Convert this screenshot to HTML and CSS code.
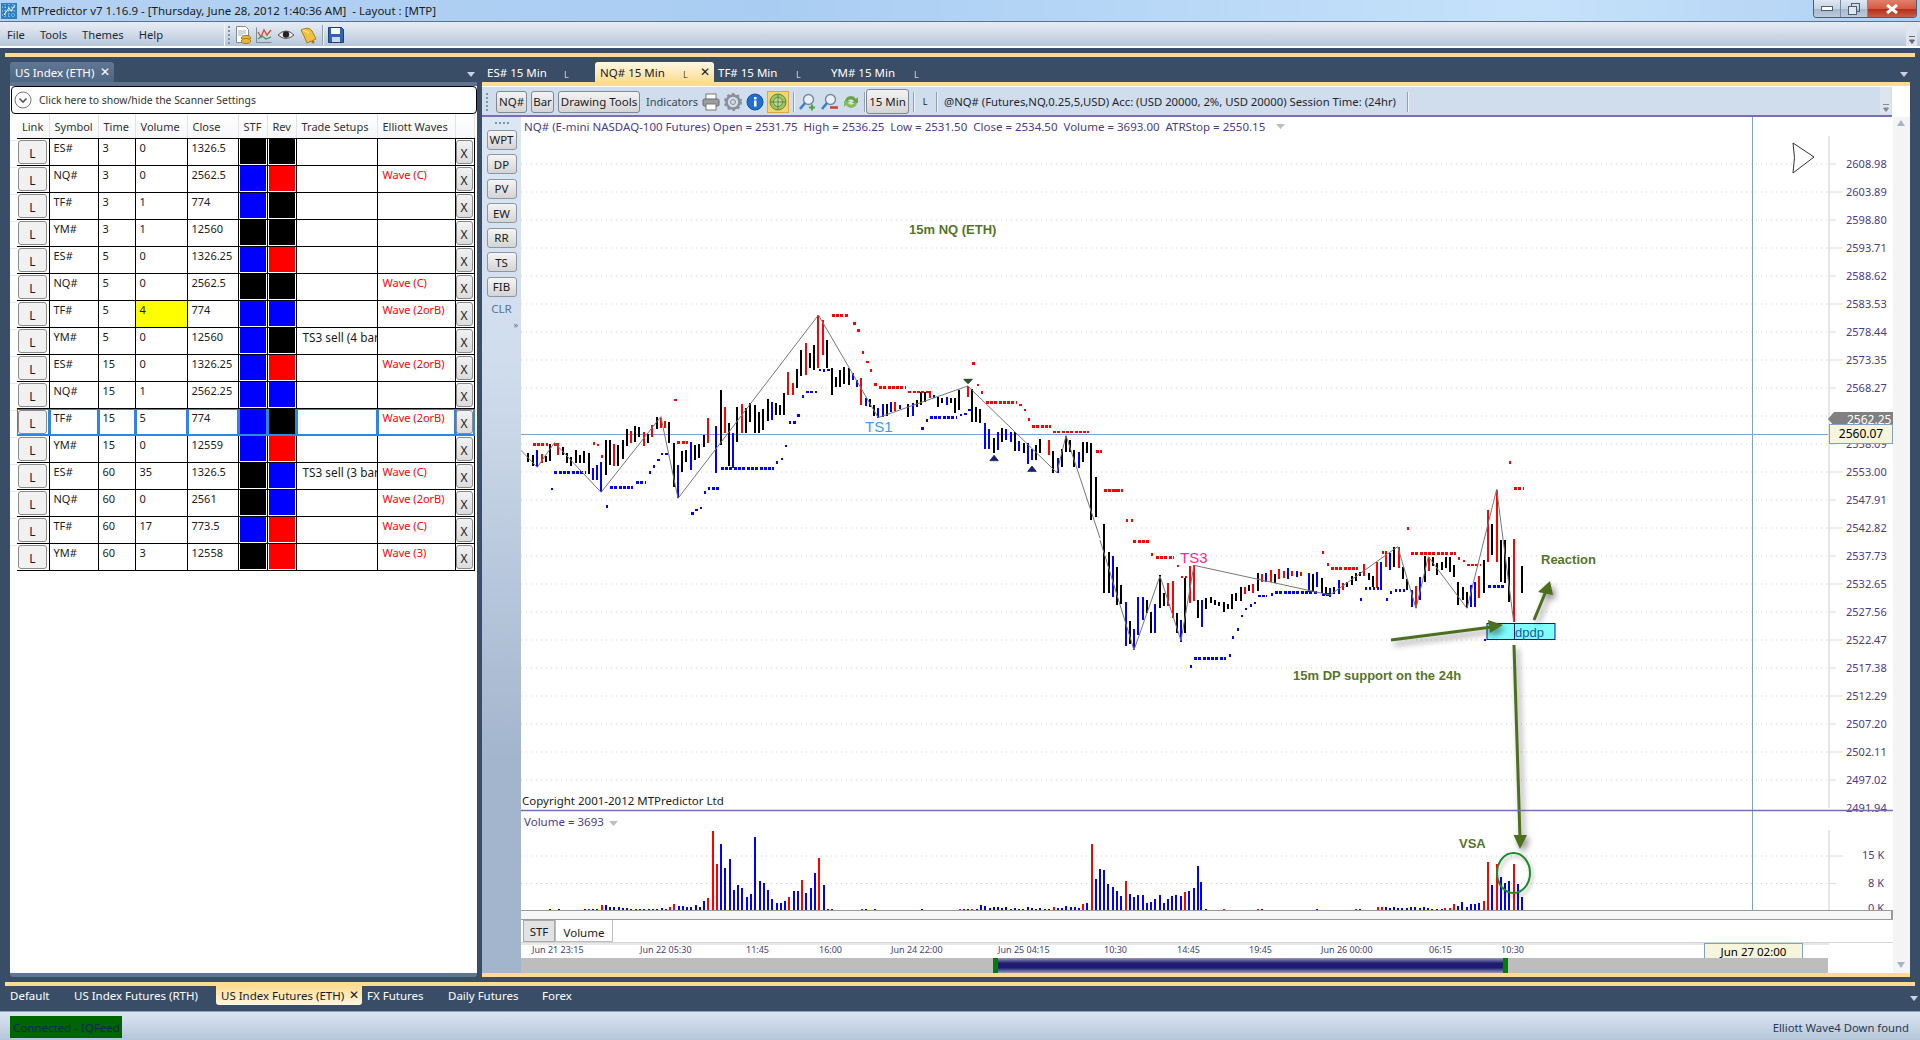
FILE: index.html
```html
<!DOCTYPE html>
<html lang="en">
<head>
<meta charset="utf-8">
<title>MTPredictor</title>
<link rel="stylesheet" href="styles.css">
</head>
<body>
<div class="titlebar">
  <svg class="appicon" width="16" height="16" viewBox="0 0 16 16"><rect width="16" height="16" fill="#2f7fc4"/><path d="M1 4h14M1 8h14M1 12h14M4 1v14M8 1v14M12 1v14" stroke="#bfe3f7" stroke-dasharray="1 2"/><path d="M3 12L8 5l2 3 4-6" stroke="#fff" fill="none"/></svg>
  <span class="titletext">MTPredictor v7 1.16.9 - [Thursday, June 28, 2012 1:40:36 AM] &nbsp;- Layout : [MTP]</span>
  <div class="winbtns">
    <span class="winbtn"><svg width="12" height="6"><rect x=".5" y=".5" width="11" height="4" fill="#fff" stroke="#4c5e74"/></svg></span>
    <span class="winbtn"><svg width="12" height="12"><rect x="3.5" y=".5" width="8" height="8" fill="none" stroke="#4c5e74"/><rect x=".5" y="3.5" width="8" height="8" fill="#dfe7f0" stroke="#4c5e74"/></svg></span>
    <span class="winbtn close"><svg width="14" height="10"><path d="M2 1l10 8M12 1L2 9" stroke="#fff" stroke-width="3"/></svg></span>
  </div>
</div>
<div class="menubar">
  <nav class="menu"><span>File</span><span>Tools</span><span>Themes</span><span>Help</span></nav>
  <div class="quick">
    <i class="grip"></i>
    <svg width="16" height="18" viewBox="0 0 16 18"><path d="M1.5.5h9l3 3v13h-12z" fill="#fff" stroke="#7d8a99"/><path d="M3 5h8M3 7h8M3 9h5" stroke="#9fb0c2"/><ellipse cx="11" cy="12" rx="4.500" ry="2.500" fill="#e6b93e" stroke="#a07a1c"/><ellipse cx="11" cy="15" rx="4.500" ry="2.500" fill="#e6b93e" stroke="#a07a1c"/></svg>
    <svg width="16" height="16" viewBox="0 0 16 16"><path d="M.5.5v15h15" fill="none" stroke="#7d8a99"/><path d="M2 5l3 5 3-7 3 5 4-5" fill="none" stroke="#d14a3c" stroke-width="1.300"/><path d="M2 12l4-3 4 3 5-2" fill="none" stroke="#3f9b4a" stroke-width="1.300"/></svg>
    <svg width="18" height="12" viewBox="0 0 18 12"><path d="M1 6q8-8 16 0q-8 7-16 0z" fill="#eee" stroke="#555"/><circle cx="9" cy="5.500" r="3.200" fill="#222"/></svg>
    <svg width="17" height="17" viewBox="0 0 17 17"><path d="M1 3q8-4 11 1l4 8-9 4-3-7z" fill="#f0c040" stroke="#a67c1a"/><path d="M3 3l6 3" stroke="#fff3c4"/><circle cx="13" cy="15" r="1.500" fill="#a67c1a"/></svg>
    <i class="vsep"></i>
    <svg width="16" height="16" viewBox="0 0 16 16"><path d="M.5.5h13l2 2v13H.5z" fill="#2f62b8" stroke="#1d3f7c"/><rect x="3" y="1" width="9" height="6" fill="#fff"/><rect x="4" y="10" width="8" height="5" fill="#cfd9e6"/></svg>
  </div>
  <div class="overflow"><svg width="8" height="8"><path d="M1 .5h6M1.500 4h5L4 7.500z" stroke="#667" fill="#667"/></svg></div>
</div>

<div class="workspace">
  <div class="docline"></div>
  <div class="docs">
    <aside class="leftdock">
      <div class="docktabs">
        <span class="docktab">US Index (ETH) <b class="cross">✕</b></span>
        <i class="tri-white"></i>
      </div>
      <div class="scanner">
        <div class="settings">
          <span class="chev"><svg width="18" height="18" viewBox="0 0 18 18"><circle cx="9" cy="9" r="8" fill="#fff" stroke="#777"/><path d="M5.500 7.500L9 11l3.500-3.500" fill="none" stroke="#555" stroke-width="1.600"/></svg></span>
          Click here to show/hide the Scanner Settings
        </div>
        <table class="grid">
          <colgroup><col class="c-l"><col class="c-sym"><col class="c-time"><col class="c-vol"><col class="c-close"><col class="c-stf"><col class="c-rev"><col class="c-ts"><col class="c-ew"><col class="c-x"></colgroup>
          <thead><tr><th>Link</th><th>Symbol</th><th>Time</th><th>Volume</th><th>Close</th><th>STF</th><th>Rev</th><th>Trade Setups</th><th>Elliott Waves</th><th></th></tr></thead>
          <tbody>
            <tr><td class="lb"><button>L</button></td><td>ES#</td><td>3</td><td>0</td><td>1326.5</td><td class="sw k"><i></i></td><td class="sw k"><i></i></td><td></td><td class="ew"></td><td class="xb"><button>X</button></td></tr>
            <tr><td class="lb"><button>L</button></td><td>NQ#</td><td>3</td><td>0</td><td>2562.5</td><td class="sw b"><i></i></td><td class="sw r"><i></i></td><td></td><td class="ew">Wave (C)</td><td class="xb"><button>X</button></td></tr>
            <tr><td class="lb"><button>L</button></td><td>TF#</td><td>3</td><td>1</td><td>774</td><td class="sw b"><i></i></td><td class="sw k"><i></i></td><td></td><td class="ew"></td><td class="xb"><button>X</button></td></tr>
            <tr><td class="lb"><button>L</button></td><td>YM#</td><td>3</td><td>1</td><td>12560</td><td class="sw k"><i></i></td><td class="sw k"><i></i></td><td></td><td class="ew"></td><td class="xb"><button>X</button></td></tr>
            <tr><td class="lb"><button>L</button></td><td>ES#</td><td>5</td><td>0</td><td>1326.25</td><td class="sw b"><i></i></td><td class="sw r"><i></i></td><td></td><td class="ew"></td><td class="xb"><button>X</button></td></tr>
            <tr><td class="lb"><button>L</button></td><td>NQ#</td><td>5</td><td>0</td><td>2562.5</td><td class="sw k"><i></i></td><td class="sw k"><i></i></td><td></td><td class="ew">Wave (C)</td><td class="xb"><button>X</button></td></tr>
            <tr><td class="lb"><button>L</button></td><td>TF#</td><td>5</td><td class="hl">4</td><td>774</td><td class="sw b"><i></i></td><td class="sw b"><i></i></td><td></td><td class="ew">Wave (2orB)</td><td class="xb"><button>X</button></td></tr>
            <tr><td class="lb"><button>L</button></td><td>YM#</td><td>5</td><td>0</td><td>12560</td><td class="sw b"><i></i></td><td class="sw k"><i></i></td><td class="ts">TS3 sell (4 bar</td><td class="ew"></td><td class="xb"><button>X</button></td></tr>
            <tr><td class="lb"><button>L</button></td><td>ES#</td><td>15</td><td>0</td><td>1326.25</td><td class="sw b"><i></i></td><td class="sw r"><i></i></td><td></td><td class="ew">Wave (2orB)</td><td class="xb"><button>X</button></td></tr>
            <tr><td class="lb"><button>L</button></td><td>NQ#</td><td>15</td><td>1</td><td>2562.25</td><td class="sw b"><i></i></td><td class="sw b"><i></i></td><td></td><td class="ew"></td><td class="xb"><button>X</button></td></tr>
            <tr class="sel"><td class="lb"><button>L</button></td><td>TF#</td><td>15</td><td>5</td><td>774</td><td class="sw b"><i></i></td><td class="sw k"><i></i></td><td></td><td class="ew">Wave (2orB)</td><td class="xb"><button>X</button></td></tr>
            <tr><td class="lb"><button>L</button></td><td>YM#</td><td>15</td><td>0</td><td>12559</td><td class="sw b"><i></i></td><td class="sw r"><i></i></td><td></td><td class="ew"></td><td class="xb"><button>X</button></td></tr>
            <tr><td class="lb"><button>L</button></td><td>ES#</td><td>60</td><td>35</td><td>1326.5</td><td class="sw k"><i></i></td><td class="sw b"><i></i></td><td class="ts">TS3 sell (3 bar</td><td class="ew">Wave (C)</td><td class="xb"><button>X</button></td></tr>
            <tr><td class="lb"><button>L</button></td><td>NQ#</td><td>60</td><td>0</td><td>2561</td><td class="sw k"><i></i></td><td class="sw b"><i></i></td><td></td><td class="ew">Wave (2orB)</td><td class="xb"><button>X</button></td></tr>
            <tr><td class="lb"><button>L</button></td><td>TF#</td><td>60</td><td>17</td><td>773.5</td><td class="sw b"><i></i></td><td class="sw r"><i></i></td><td></td><td class="ew">Wave (C)</td><td class="xb"><button>X</button></td></tr>
            <tr><td class="lb"><button>L</button></td><td>YM#</td><td>60</td><td>3</td><td>12558</td><td class="sw k"><i></i></td><td class="sw r"><i></i></td><td></td><td class="ew">Wave (3)</td><td class="xb"><button>X</button></td></tr>
          </tbody>
        </table>
      </div>
    </aside>

    <main class="chartdock">
      <div class="charttabs">
        <span class="ctab w1">ES# 15 Min<small>L</small></span>
        <span class="ctab active">NQ# 15 Min<small>L</small><b class="cross">✕</b></span>
        <span class="ctab w2">TF# 15 Min<small>L</small></span>
        <span class="ctab w3">YM# 15 Min<small>L</small></span>
        <i class="tri-white"></i>
      </div>
      <div class="chartframe">
        <div class="charttool">
          <i class="grip"></i>
          <button class="tb b1">NQ#</button>
          <button class="tb b2">Bar</button>
          <button class="tb b3">Drawing Tools</button>
          <span class="tlabel">Indicators</span>
          <svg width="18" height="18" viewBox="0 0 18 18"><rect x="4" y="1" width="10" height="6" fill="#fff" stroke="#777"/><rect x="1" y="6" width="16" height="7" rx="1.500" fill="#9a9ea5" stroke="#666"/><rect x="4" y="11" width="10" height="6" fill="#fff" stroke="#777"/></svg>
          <svg width="18" height="18" viewBox="0 0 18 18"><circle cx="9" cy="9" r="6.500" fill="none" stroke="#8a8f96" stroke-width="2.500"/><circle cx="9" cy="9" r="8" fill="none" stroke="#8a8f96" stroke-width="2" stroke-dasharray="2.600 2.600"/><circle cx="9" cy="9" r="2.500" fill="#d5d8dc" stroke="#8a8f96"/></svg>
          <svg width="18" height="18" viewBox="0 0 18 18"><circle cx="9" cy="9" r="8" fill="#1f6fd0" stroke="#174f9c"/><rect x="8" y="7.500" width="2.500" height="6" fill="#fff"/><rect x="8" y="4" width="2.500" height="2.400" fill="#fff"/></svg>
          <span class="ichi"><svg width="18" height="18" viewBox="0 0 18 18"><circle cx="9" cy="9" r="8" fill="#9fc36a" stroke="#5f8a3a"/><circle cx="9" cy="9" r="4.500" fill="#c2dc95" stroke="#5f8a3a"/><path d="M9 1v16M1 9h16" stroke="#5f8a3a"/></svg></span>
          <i class="vsep"></i>
          <svg width="18" height="18" viewBox="0 0 18 18"><circle cx="10.500" cy="6.500" r="5" fill="#e8f1f9" stroke="#7a8794" stroke-width="1.400"/><path d="M7 10L2 16" stroke="#3d7ec4" stroke-width="2.600"/><path d="M11 14.500h6M14 11.500v6" stroke="#4ea24a" stroke-width="2"/></svg>
          <svg width="18" height="18" viewBox="0 0 18 18"><circle cx="10.500" cy="6.500" r="5" fill="#e8f1f9" stroke="#7a8794" stroke-width="1.400"/><path d="M7 10L2 16" stroke="#3d7ec4" stroke-width="2.600"/><path d="M10 14.500h8" stroke="#d93a32" stroke-width="2.500"/></svg>
          <svg width="18" height="18" viewBox="0 0 18 18"><path d="M3 8a6 6 0 0 1 11-2l2-2v6h-6l2-2a4 4 0 0 0-7 1z" fill="#6aa53f"/><path d="M15 10a6 6 0 0 1-11 2l-2 2V8h6l-2 2a4 4 0 0 0 7-1z" fill="#86bb55"/></svg>
          <i class="vsep"></i>
          <button class="tb b4">15 Min</button>
          <i class="vsep"></i>
          <span class="tl">L</span>
          <i class="vsep"></i>
          <span class="tinfo">@NQ# (Futures,NQ,0.25,5,USD) Acc: (USD 20000, 2%, USD 20000) Session Time: (24hr)</span>
          <i class="vsep"></i>
          <div class="tool-end"><svg width="8" height="8"><path d="M1 .5h6M1.500 4h5L4 7.500z" stroke="#889" fill="#889"/></svg></div>
        </div>
        <div class="chartbody">
          <div class="sidetools">
            <i class="hgrip"></i>
            <button class="sb">WPT</button><button class="sb">DP</button><button class="sb">PV</button><button class="sb">EW</button><button class="sb">RR</button><button class="sb">TS</button><button class="sb">FIB</button>
            <span class="clr">CLR</span>
            <span class="more">»</span>
          </div>
          <div class="chartcol">
            <div class="panes">
              <svg class="plot" width="1372" height="793" viewBox="521 117 1372 793">
                <path class="gridl" d="M521 164H1829M521 192H1829M521 220H1829M521 248H1829M521 276H1829M521 304H1829M521 332H1829M521 360H1829M521 388H1829M521 416H1829M521 444H1829M521 472H1829M521 500H1829M521 528H1829M521 556H1829M521 584H1829M521 612H1829M521 640H1829M521 668H1829M521 696H1829M521 724H1829M521 752H1829M521 780H1829M521 856H1829M521 883.500H1829"/>
                <path class="vline" d="M1752.500 117V910"/>
                <path class="axis" d="M1829 136V808M1829 830V910"/>
                <path class="ticks" d="M1829 164H1836M1829 192H1843M1829 220H1836M1829 248H1843M1829 276H1836M1829 304H1843M1829 332H1836M1829 360H1843M1829 388H1836M1829 444H1836M1829 472H1843M1829 500H1836M1829 528H1843M1829 556H1836M1829 584H1843M1829 612H1836M1829 640H1843M1829 668H1836M1829 696H1843M1829 724H1836M1829 752H1843M1829 780H1836M1829 856H1843M1829 883.500H1836"/>
                <path class="priceline" d="M521 434.500H1828"/>

                <text class="legend" x="524" y="131" xml:space="preserve">NQ# (E-mini NASDAQ-100 Futures) Open = 2531.75  High = 2536.25  Low = 2531.50  Close = 2534.50  Volume = 3693.00  ATRStop = 2550.15</text>
                <path class="tri" d="M1276 124h9l-4.500 5z"/>
                <path class="play" d="M1793 143L1814 157L1793 173Q1796 157 1793 143z"/>

                <g class="axlabels">
                  <text x="1846" y="168">2608.98</text><text x="1846" y="196">2603.89</text><text x="1846" y="224">2598.80</text><text x="1846" y="252">2593.71</text><text x="1846" y="280">2588.62</text><text x="1846" y="308">2583.53</text><text x="1846" y="336">2578.44</text><text x="1846" y="364">2573.35</text><text x="1846" y="392">2568.27</text><text x="1846" y="448">2558.09</text><text x="1846" y="476">2553.00</text><text x="1846" y="504">2547.91</text><text x="1846" y="532">2542.82</text><text x="1846" y="560">2537.73</text><text x="1846" y="588">2532.65</text><text x="1846" y="616">2527.56</text><text x="1846" y="644">2522.47</text><text x="1846" y="672">2517.38</text><text x="1846" y="700">2512.29</text><text x="1846" y="728">2507.20</text><text x="1846" y="756">2502.11</text><text x="1846" y="784">2497.02</text><text x="1846" y="812">2491.94</text>
                  <text x="1862" y="859">15 K</text><text x="1868" y="887">8 K</text><text x="1868" y="912">0 K</text>
                </g>

                <g transform="translate(520 290) scale(.38265 .33333)">
                  <path class="bar k" d="M22 490V515M33 495V527M68 498V516M78 463V514M112 470V495M122 490V520M133 500V527M146 480V518M157 495V520M168 482V518M180 490V552M224 450V555M235 450V525M257 465V528M268 450V508M280 418V468M301 408V455M312 412V440M335 432V460M357 380V418M390 397V460M402 460V592M424 483V545M434 480V515M457 465V510M468 462V505M480 435V472M525 300V465M547 400V528M568 352V455M590 355V430M602 340V395M613 345V430M624 367V430M636 357V420M647 327V392M668 340V375M680 345V375M691 310V375M724 237V295M735 180V258M758 190V235M769 165V240M803 150V235M815 235V315M825 262V290M837 240V290M848 232V282M860 235V285M915 327V350M925 345V378M958 342V378M1014 342V380M1037 330V350M1048 307V345M1059 307V335M1092 322V352M1104 323V340M1126 325V340M1137 325V368M1148 300V360M1180 298V395M1192 350V395M1203 358V398M1238 445V488M1260 415V455M1293 425V482M1316 458V488M1349 465V510M1360 447V490M1393 483V548M1416 477V530M1427 437V485M1438 450V485M1449 480V530M1471 455V515M1482 455V490M1493 460V690M1505 560V680"/>
                  <path class="bar r" d="M57 492V518M100 460V494M246 462V528M290 424V458M323 425V467M345 405V440M368 385V415M379 392V415M491 385V460M535 352V430M580 342V430M701 247V315M713 280V315M748 158V255M780 75V235M792 90V195M892 265V345M980 337V362M1071 303V325M1170 288V322M1382 450V495"/>
                  <path class="bar b" d="M45 480V530M190 535V570M201 525V570M212 515V607M413 525V625M446 455V540M512 408V548M557 430V535M658 335V390M870 250V270M881 270V290M905 325V347M936 355V385M948 343V380M969 337V365M992 345V358M1026 340V378M1082 315V325M1115 320V345M1215 400V476M1226 418V478M1249 425V480M1271 417V450M1282 427V455M1304 452V484M1327 460V523M1338 478V510M1405 505V548M1460 487V535"/>
                  <path class="dot r" d="M190 460h6M201 465h6M212 500h6M403 330h6M871 100h6M882 122h6M893 188h6M905 216h6M915 241h6M926 284h6M1182 220h6M1193 285h6M1205 307h6M1305 345h6M1316 360h6M1328 388h6"/>
                  <path class="row r" d="M33 463H72M90 463H100M411 458H440M815 77H860M938 292H1008M1015 306H1072M1217 338H1300M1338 409H1388M1393 426H1486M1505 485H1522M1525 601H1566"/>
                  <path class="dot b" d="M80 597h6M225 649h6M337 548h6M348 530h6M359 510h6M369 492h6M380 492h6M448 670h6M458 660h6M470 654h6M481 607h6M491 596h6M503 596h6M513 596h6M669 518h6M681 507h6M693 468h6M703 398h6M714 398h6M725 376h6M737 319h6M748 306h6M759 306h6M770 306h6M781 240h6M792 242h6M803 240h6M1049 415h6M1060 391h6M1150 375h6M1161 372h6M1172 360h6"/>
                  <path class="row b" d="M90 548H172M235 592H296M303 578H329M525 535H664M1071 382H1142"/>
                  <path class="zig" d="M0 478L45 532L90 458L212 607L368 380L413 625L780 75L936 383L1170 288L1403 548L1427 437L1516 745"/>
                  <path class="m-green" d="M1160 268h22l-11 13z"/>
                  <path class="m-navy" d="M1228 512l11-16 11 16zM1327 544l11-16 11 16z"/>
                </g>
                <text class="ts1" x="865" y="432">TS1</text>

                <g transform="translate(1100 450) scale(.33333)">
                  <path class="bar k" d="M12 222V428M26 305V430M50 350V465M62 405V462M90 513V583M140 450V490M153 485V548M180 375V473M192 428V468M231 490V550M256 385V550M295 450V505M319 445V478M332 442V460M345 450V465M358 455V467M371 455V485M384 462V478M396 432V478M409 430V452M422 412V452M448 406V422M473 368V422M525 372V400M640 372V425M665 385V430M678 412V435M703 412V432M742 395V412M755 378V405M768 370V392M780 365V378M806 368V390M819 378V410M883 292V350M909 350V388M922 388V420M974 318V395M999 320V348M1012 338V375M1025 335V360M1037 322V355M1050 320V365M1063 345V380M1075 395V465M1088 410V450M1101 425V475M1152 330V430M1177 222V315M1203 270V395M1215 270V400M1228 322V455M1266 348V428"/>
                  <path class="bar r" d="M205 398V468M219 393V505M270 348V460M282 346V452M435 412V432M460 403V430M486 372V395M512 360V395M538 358V388M551 362V385M577 362V378M603 365V378M729 400V420M793 342V378M832 335V415M858 310V350M896 290V355M948 408V475M987 322V362M1138 378V445M1165 180V335M1190 120V335M1241 268V515"/>
                  <path class="bar b" d="M38 318V442M78 456V587M102 537V600M114 441V555M128 442V510M166 463V548M243 510V575M307 450V530M498 370V395M564 355V388M590 362V380M627 370V425M652 365V412M690 415V440M716 390V432M843 335V420M870 310V360M935 420V472M961 382V450M1113 405V470M1126 397V470"/>
                  <path class="dot r" d="M78 212h6M92 212h6M154 313h6M232 348h6M243 381h6M255 381h6M667 307h6M680 343h6M922 235h6M845 308h6M855 308h6M1075 325h6M1088 333h6M1228 38h6"/>
                  <path class="row r" d="M12 121H70M100 275H148M167 322H222M692 355H774M933 310H1068M1100 345H1142M1242 116H1272"/>
                  <path class="dot b" d="M270 649h6M386 617h6M397 563h6M410 538h6M423 498h6M436 477h6M449 467h6M462 459h6M512 434h6M781 448h6M795 416h6M808 416h6M820 416h6M832 416h6M858 449h6M871 428h6M884 421h6M897 421h6M910 421h6M1153 570h6"/>
                  <path class="row b" d="M282 625H378M473 438H502M525 428H652M665 433H692M1165 410H1218"/>
                  <path class="zig" d="M0 270L102 600L180 378L243 572L282 346L690 435L893 290L948 475L985 320L1101 475L1190 118L1241 515"/>
                </g>
                <text class="ts3" x="1180" y="563">TS3</text>

                <rect class="dpbox" x="1487" y="623.500" width="68" height="16"/>
                <path class="dpline" d="M1514.500 624V640"/>
                <text class="dptxt" x="1515" y="637">dpdp</text>

                <text class="note" x="909" y="234">15m NQ (ETH)</text>
                <text class="note" x="1541" y="564">Reaction</text>
                <text class="note" x="1293" y="680">15m DP support on the 24h</text>
                <text class="note" x="1459" y="848">VSA</text>

                <g class="arrows">
                  <path class="shaft" d="M1391 640L1492 627"/><path class="head" d="M1503 625L1488 620L1490 633z"/>
                </g>
                <g class="arrows">
                  <path class="shaft" d="M1534 620L1546 591"/><path class="head" d="M1550 581L1538 592L1553 595z"/>
                </g>
                <g class="arrows">
                  <path class="shaft" d="M1514 645L1520 838"/><path class="head" d="M1520 849L1513.500 835L1527 835z"/>
                </g>

                <text class="copyright" x="522" y="805">Copyright 2001-2012 MTPredictor Ltd</text>
                <path class="split" d="M521 810.500H1893"/>
                <text class="legend" x="524" y="826">Volume = 3693</text>
                <path class="tri" d="M609 821h9l-4.500 5z"/>

                <g transform="translate(500 790) scale(.44643 .33333)">
                  <path class="bar b" d="M113 357V360M132 357V360M190 358V360M208 358V360M218 357V360M237 345V360M246 351V360M256 351V360M266 351V360M275 353V360M284 354V360M294 357V360M304 357V360M313 357V360M323 357V360M333 357V360M342 357V360M352 357V360M362 354V360M372 356V360M400 349V360M409 347V360M419 351V360M428 351V360M438 345V360M448 351V360M457 333V360M495 162V360M504 234V360M515 207V360M524 300V360M533 285V360M543 295V360M553 320V360M562 312V360M571 141V360M582 273V360M592 279V360M601 300V360M610 326V360M620 339V360M629 339V360M638 333V360M658 303V360M667 303V360M686 309V360M696 294V360M705 249V360M725 285V360M734 357V360M743 357V360M820 357V360M839 357V360M945 357V360M1039 357V360M1048 357V360M1068 357V360M1077 345V360M1087 347V360M1097 353V360M1106 352V360M1115 351V360M1125 353V360M1134 351V360M1144 356V360M1153 354V360M1163 357V360M1172 357V360M1182 351V360M1191 353V360M1201 356V360M1210 354V360M1220 357V360M1230 356V360M1249 354V360M1259 354V360M1268 348V360M1278 351V360M1287 351V360M1297 354V360M1315 339V360M1335 267V360M1344 237V360M1353 240V360M1363 282V360M1373 291V360M1382 303V360M1392 318V360M1411 312V360M1420 321V360M1429 315V360M1440 315V360M1449 339V360M1458 336V360M1468 327V360M1478 315V360M1487 339V360M1497 327V360M1506 318V360M1515 315V360M1525 318V360M1544 303V360M1554 294V360M1563 228V360"/>
                  <path class="bar r" d="M199 357V360M228 345V360M381 350V360M390 342V360M466 324V360M477 123V360M486 222V360M648 321V360M676 270V360M714 204V360M810 357V360M1030 357V360M1058 357V360M1240 351V360M1306 342V360M1325 162V360M1402 273V360M1535 306V360"/>
                </g>
                <g transform="translate(1200 790) scale(.45914 .33333)">
                  <path class="bar b" d="M3 276V360M14 357V360M136 357V360M255 357V360M349 357V360M405 351V360M414 354V360M423 351V360M432 354V360M441 354V360M451 354V360M459 351V360M468 351V360M479 354V360M488 351V360M497 354V360M506 357V360M516 357V360M526 357V360M562 348V360M571 336V360M581 351V360M590 342V360M599 342V360M608 339V360M636 285V360M655 261V360M664 279V360M673 273V360M692 282V360M701 321V360"/>
                  <path class="bar r" d="M52 357V360M127 357V360M340 357V360M388 351V360M397 351V360M534 354V360M544 354V360M553 342V360M618 333V360M627 216V360M646 222V360M684 222V360"/>
                </g>
                <ellipse class="vsa" cx="1513.500" cy="873" rx="16.500" ry="20"/>
              </svg>
              <div class="pricetag"><span>2562.25</span></div>
              <div class="hoverprice">2560.07</div>
            </div>
            <div class="hscroll"></div>
            <div class="subtabs"><span class="stab on">STF</span><span class="stab">Volume</span></div>
            <div class="dateaxis">
              <span class="d1">Jun 21 23:15</span><span class="d2">Jun 22 05:30</span><span class="d3">11:45</span><span class="d4">16:00</span><span class="d5">Jun 24 22:00</span><span class="d6">Jun 25 04:15</span><span class="d7">10:30</span><span class="d8">14:45</span><span class="d9">19:45</span><span class="d10">Jun 26 00:00</span><span class="d11">06:15</span><span class="d12">10:30</span>
              <b class="datebox">Jun 27 02:00</b>
            </div>
            <div class="navigator"><div class="navthumb"></div></div>
          </div>
          <div class="vscroll"><i class="up"></i><i class="down"></i></div>
        </div>
      </div>
    </main>
  </div>
  <div class="bottomline"></div>
  <div class="layouttabs">
    <span class="ltab l1">Default</span>
    <span class="ltab l2">US Index Futures (RTH)</span>
    <span class="ltab active">US Index Futures (ETH)<b class="cross">✕</b></span>
    <span class="ltab l3">FX Futures</span>
    <span class="ltab l4">Daily Futures</span>
    <span class="ltab l5">Forex</span>
    <i class="tri-white"></i>
  </div>
</div>
<footer class="status">
  <span class="conn">Connected - IQFeed</span>
  <span class="found">Elliott Wave4 Down found</span>
</footer>
</body>
</html>
```
FILE: styles.css
```css
*{box-sizing:border-box}
html,body{margin:0;height:1040px;overflow:hidden}
body{width:1920px;display:flex;flex-direction:column;background:#3a4d66;font:11.500px "Noto Sans",sans-serif;color:#1b1b1b}
i,b{font-style:normal;font-weight:normal}
button{font:inherit;color:inherit;padding:0}

.titlebar{height:22px;flex:none;display:flex;align-items:center;background:linear-gradient(90deg,#b4d2f2,#a9cdf2 40%,#c6e2fb 80%,#b0d0f2);border-bottom:1px solid #5d7189;position:relative}
.appicon{margin:0 4px 0 1px}
.titletext{font-size:11.500px;color:#1c1c1c;white-space:nowrap}
.winbtns{position:absolute;right:3px;top:0;height:18px;display:flex;border:1px solid #4a5d75;border-top:0;border-radius:0 0 4px 4px;overflow:hidden}
.winbtn{width:27px;display:flex;align-items:center;justify-content:center;background:linear-gradient(#dfe8f2,#c5d3e2 50%,#a8b9cc 55%,#bccadb);border-right:1px solid #7a8aa0}
.winbtn.close{width:48px;border:0;background:linear-gradient(#e0806c,#d75a42 50%,#b5301c 55%,#c85d46)}

.menubar{height:26px;flex:none;display:flex;align-items:stretch;background:linear-gradient(#e6ebf3 0,#dfe6f0 20%,#b7c7da 92%,#fff 92%);position:relative}
.menu{display:flex;height:24px;align-items:center;padding-left:7px;gap:15px;font-size:11.200px}
.menu span{color:#1c2a3a}
.quick{position:absolute;left:224px;top:2px;height:22px;display:flex;align-items:center;gap:5px;border-left:1px solid #f3f6fa}
.grip{display:inline-block;width:2px;height:18px;margin-left:3px;background:repeating-linear-gradient(#7f93ab 0 2px,transparent 2px 4px)}
.vsep{display:inline-block;width:1px;height:20px;background:#8fa0b5;box-shadow:1px 0 #eef3f8;flex:none}
.overflow{position:absolute;right:3px;top:1px;width:11px;height:23px;background:#dfe5ee;display:flex;align-items:flex-end;justify-content:center;padding-bottom:2px}

.workspace{flex:1;display:flex;flex-direction:column;padding-top:5px;background:#3a4d66}
.docline{height:4px;margin:0 5px;background:#fddc92;flex:none}
.docs{flex:none;height:920px;display:flex;margin:0}

.leftdock{width:482px;flex:none;padding:5px 5px 0 10px;display:flex;flex-direction:column}
.docktabs{height:20px;flex:none;position:relative}
.docktab{display:flex;align-items:center;gap:6px;width:104px;height:20px;padding-left:5px;background:linear-gradient(#5f7694,#4f6683);color:#fff;border-radius:3px 3px 0 0;white-space:nowrap}
.cross{font-size:12px;line-height:1}
.tri-white{position:absolute;right:2px;top:10px;width:0;height:0;border:4px solid transparent;border-top:5px solid #c9d2de;border-bottom:0}
.scanner{height:895px;background:#fff repeating-linear-gradient(#fff 0 26px,#e2eaf5 26px 27px) 0 28px/7px 456px no-repeat;border-top:4px solid #5d7391;border-bottom:4px solid #60758f;border-radius:0 0 3px 3px;flex:none;display:flex;flex-direction:column}
.settings{height:28px;flex:none;margin-left:1px;border:1px solid #000;border-radius:4px;display:flex;align-items:center;gap:7px;padding-left:2px;background:#fff;white-space:nowrap;font-size:10.400px;color:#333}
.chev{display:flex}

.grid{margin:0 0 0 7px;border-collapse:collapse;table-layout:fixed;width:457px;background:#fff;font-size:11px}
.c-l{width:32px}.c-sym{width:49px}.c-time{width:37px}.c-vol{width:52px}.c-close{width:51px}.c-stf{width:29px}.c-rev{width:29px}.c-ts{width:81px}.c-ew{width:78px}.c-x{width:19px}
.grid th{height:24px;font-weight:normal;text-align:left;padding:2px 0 0 5px;background:linear-gradient(#fff,#f5f6f8);border-right:1px solid #e3e3e3;border-bottom:1px solid #000;color:#333}
.grid td{height:27px;border:1px solid #000;padding:0 0 7px 4px;vertical-align:middle;white-space:nowrap;overflow:hidden;line-height:14px}
.grid td.lb{padding:0;border-left:0;text-align:center;vertical-align:top}
.grid td.xb{padding:0;text-align:center;vertical-align:top}
.lb button{display:block;width:29px;height:24px;margin:1px 0 0 1px;border:1px solid #8a8a8a;border-radius:3px;background:#f1f1f1;padding-top:4px;font-size:12px}
.xb button{display:block;width:17px;height:24px;margin:1px 0 0;border:1px solid #8a8a8a;border-radius:3px;background:linear-gradient(#f2f2f2,#dcdcdc);padding-top:4px;font-size:12px}
.grid td.sw{padding:0}
.sw i{display:block;height:25px;margin:0 1px}
.sw.k i{background:#000}.sw.b i{background:#00f}.sw.r i{background:#f00}
.grid td.hl{background:#ff0}
.grid td.ew{color:#f00;padding-left:5px}
.grid td.ts{padding-left:6px;text-overflow:clip;font-size:11.800px}
.sel td{border-color:#2e86de;box-shadow:inset 0 0 0 1px #2e86de}

.chartdock{width:1428px;flex:none;padding-top:5px;position:relative;display:flex;flex-direction:column}
.charttabs{height:20px;flex:none;position:relative;display:flex;color:#fff}
.ctab{display:flex;align-items:center;white-space:nowrap;height:20px;position:relative}
.ctab small{font-size:9px;opacity:.75;position:absolute;top:6px}
.w1{width:113px;padding-left:5px}.w1 small{left:82px}
.ctab.active{width:119px;padding-left:5px;color:#1b1b1b;background:linear-gradient(#fff8e4,#fddc92);border-radius:3px 3px 0 0}
.ctab.active small{left:88px}
.ctab.active .cross{position:absolute;left:105px;top:4px}
.w2{width:114px;padding-left:4px}.w2 small{left:82px}
.w3{width:100px;padding-left:3px}.w3 small{left:86px}
.chartframe{height:895px;margin:0;border-top:4px solid #fddc92;border-bottom:4px solid #fddc92;flex:none;width:1428px;display:flex;flex-direction:column;background:#fff}
.charttool{height:31px;flex:none;display:flex;align-items:center;padding:1px 0 0 4px;background:#d0ddec;position:relative;gap:4px;width:1410px;border-top:1px solid #fff;border-bottom:2px solid #7a6cb5}
.charttool .grip{margin-left:0;margin-right:4px}
.tb{height:22px;border:1px solid #7f8894;border-radius:3px;background:linear-gradient(#f3f3f3,#d5d5d5);white-space:nowrap;flex:none}
.b1{width:31px}.b2{width:23px}.b3{width:82px}.b4{width:43px;height:25px;margin-left:-3px}
.tlabel{margin:0 0 0 2px;color:#38475b;font-size:11px;width:52px;white-space:nowrap}
.ichi{width:22px;height:22px;background:#f9d46c;border:1px solid #d9a640;display:flex;align-items:center;justify-content:center;margin-left:-1px}
.tl{font-size:9px;width:14px;text-align:center}
.tinfo{white-space:nowrap;margin-left:3px;width:459px;color:#1f2630;font-size:11.300px}
.tool-end{position:absolute;right:1px;top:0;width:11px;height:27px;background:#dfe5ee;display:flex;align-items:flex-end;justify-content:center;padding-bottom:2px}
.chartbody{flex:1;display:flex;min-height:0}
.sidetools{width:39px;flex:none;display:flex;flex-direction:column;align-items:center;padding:2px 0 0 0;background:linear-gradient(#dce7f4,#cfdcec 30%,#a3b5cd 75%);gap:4.500px}
.hgrip{width:14px;height:2px;margin:3px 0 1px;background:repeating-linear-gradient(90deg,#7f93ab 0 2px,transparent 2px 4px)}
.sb{width:30px;height:20px;border:1px solid #8d96a1;border-radius:3px;background:linear-gradient(#f5f5f5,#d4d4d4);padding:0;font-size:11.500px;line-height:17px}
.clr{font-size:11.500px;color:#5a7196}
.more{font-size:9px;color:#5a7196;align-self:flex-end;margin-right:3px;margin-top:-3px}
.chartcol{width:1372px;flex:none;display:flex;flex-direction:column;background:#fff}
.vscroll{width:17px;flex:none;background:#f4f4f5;position:relative}
.up,.down{position:absolute;left:4px;width:0;height:0;border:4px solid transparent}
.up{top:3px;border-bottom:6px solid #a6b3c4;border-top:0}
.down{bottom:5px;border-top:6px solid #a6b3c4;border-bottom:0}
.panes{height:793px;flex:none;position:relative}
.plot{display:block}
.pricetag{position:absolute;left:1307px;top:295px;width:65px;height:14px;background:#808080;color:#fff;clip-path:polygon(6px 0,100% 0,100% 100%,6px 100%,0 50%);font-size:12px;overflow:hidden;padding:1px 0 0 19px;line-height:14px}
.hoverprice{position:absolute;left:1308px;top:307px;width:64px;height:20px;background:#f6f5dc;border:1px solid #7da0cc;line-height:18px;text-align:center;color:#000;font-size:12px}
.hscroll{height:10px;flex:none;background:#f7f7f7;border:1px solid #9a9a9a;border-width:1px 2px 1px 0}
.subtabs{height:23px;flex:none;display:flex;padding-left:2px;border-bottom:1px solid #d5d5d5}
.stab{height:22px;width:58px;border:1px solid #bdbdbd;border-top:0;background:#fff;text-align:center;line-height:25px}
.stab.on{width:32px;background:#e2e2e2;border:1px solid #a8a8a8;line-height:21px}
.dateaxis{height:15px;flex:none;position:relative;font-size:9px;color:#45427a;white-space:nowrap;border-top:2px solid #e8e8e8;width:1308px}
.dateaxis span{position:absolute;top:-2px}
.d1{left:11px}.d2{left:119px}.d3{left:225px}.d4{left:298px}.d5{left:370px}.d6{left:477px}.d7{left:583px}.d8{left:656px}.d9{left:728px}.d10{left:800px}.d11{left:908px}.d12{left:980px}
.datebox{position:absolute;left:1183px;top:-2px;width:99px;height:15px;background:#f6f5dc;border:1px solid #7da0cc;border-bottom:0;color:#000;font-size:11.500px;text-align:center;line-height:15px}
.navigator{height:15px;flex:none;width:1307px;background:#bdbdbd;padding-left:472px}
.navthumb{width:515px;height:15px;border-left:5px solid #008000;border-right:5px solid #008000;background:linear-gradient(#9a9ab8,#1c1c70 35%,#1c1c70 65%,#9a9ab8)}

.bottomline{height:4px;flex:none;margin:5px 5px 0;background:#fddc92}
.layouttabs{flex:1;display:flex;position:relative;color:#fff;align-items:flex-start}
.ltab{height:19px;display:flex;align-items:center;white-space:nowrap;position:relative}
.l1{width:69px;padding-left:5px;margin-left:5px}
.l2{width:142px}
.ltab.active{width:146px;padding-left:5px;color:#1b1b1b;background:linear-gradient(#fddc92,#fff6df);border-radius:0 0 3px 3px}
.ltab.active .cross{position:absolute;right:3px;top:3px}
.l3{width:86px;padding-left:5px}.l4{width:94px}.l5{width:60px}
.status{height:29px;flex:none;background:linear-gradient(#dbe5f3,#b5c6da);border-top:1px solid #8ea3bb;display:flex;align-items:center;justify-content:space-between;padding:2px 11px 0 10px}
.conn{width:112px;height:22px;background:#006400;color:#0c2a58;display:flex;align-items:center;padding-left:3px;white-space:nowrap;overflow:hidden}
.found{color:#2a3a50;font-size:11.300px}

.gridl{stroke:#cfcfcf;stroke-dasharray:1 4;fill:none}
.vline{stroke:#7da0cc;fill:none}
.axis{stroke:#e6e6e6;stroke-width:2;fill:none}
.ticks{stroke:#dcdcdc;fill:none}
.priceline{stroke:#7da0d6;fill:none}
.legend{font:11.500px "Noto Sans",sans-serif;fill:#4b3b8c;white-space:pre}
.tri{fill:#bdbdbd}
.play{fill:#fff;stroke:#333}
.axlabels text{font:11px "Noto Sans",sans-serif;fill:#4b3b8c}
.bar{stroke-width:2;fill:none;vector-effect:non-scaling-stroke;shape-rendering:crispEdges}
.dot,.row{stroke-width:2.500;fill:none;vector-effect:non-scaling-stroke;shape-rendering:crispEdges}
.row{stroke-dasharray:3 1.300}
.bar.k{stroke:#000}
.bar.r,.dot.r,.row.r{stroke:#f00}
.bar.b,.dot.b,.row.b{stroke:#00f}
.zig{fill:none;stroke:#777;stroke-width:1;vector-effect:non-scaling-stroke}
.m-green{fill:#0d6b1e;stroke:#333;vector-effect:non-scaling-stroke}
.m-navy{fill:#0d1f8c;stroke:#333;vector-effect:non-scaling-stroke}
.ts1{font:15px "Liberation Sans",sans-serif;fill:#3aa0e8}
.ts3{font:15px "Liberation Sans",sans-serif;fill:#f0308c}
.dpbox{fill:#80ffff;stroke:#0b1d8a}
.dpline{stroke:#0b1d8a}
.dptxt{font:13px "Liberation Sans",sans-serif;fill:#1c58a8}
.note{font:bold 13px "Liberation Sans",sans-serif;fill:#55752a}
.arrows{filter:drop-shadow(3px 4px 3px rgba(0,0,0,.45))}
.shaft{stroke:#4b6f1d;stroke-width:3;fill:none}
.head{fill:#4b6f1d}
.copyright{font:11.500px "Noto Sans",sans-serif;fill:#1b1b1b}
.split{stroke:#7a6cb5;stroke-width:1.500;fill:none}
.vsa{fill:none;stroke:#1b8a2a;stroke-width:2;filter:drop-shadow(2px 3px 2px rgba(0,0,0,.3))}
```
